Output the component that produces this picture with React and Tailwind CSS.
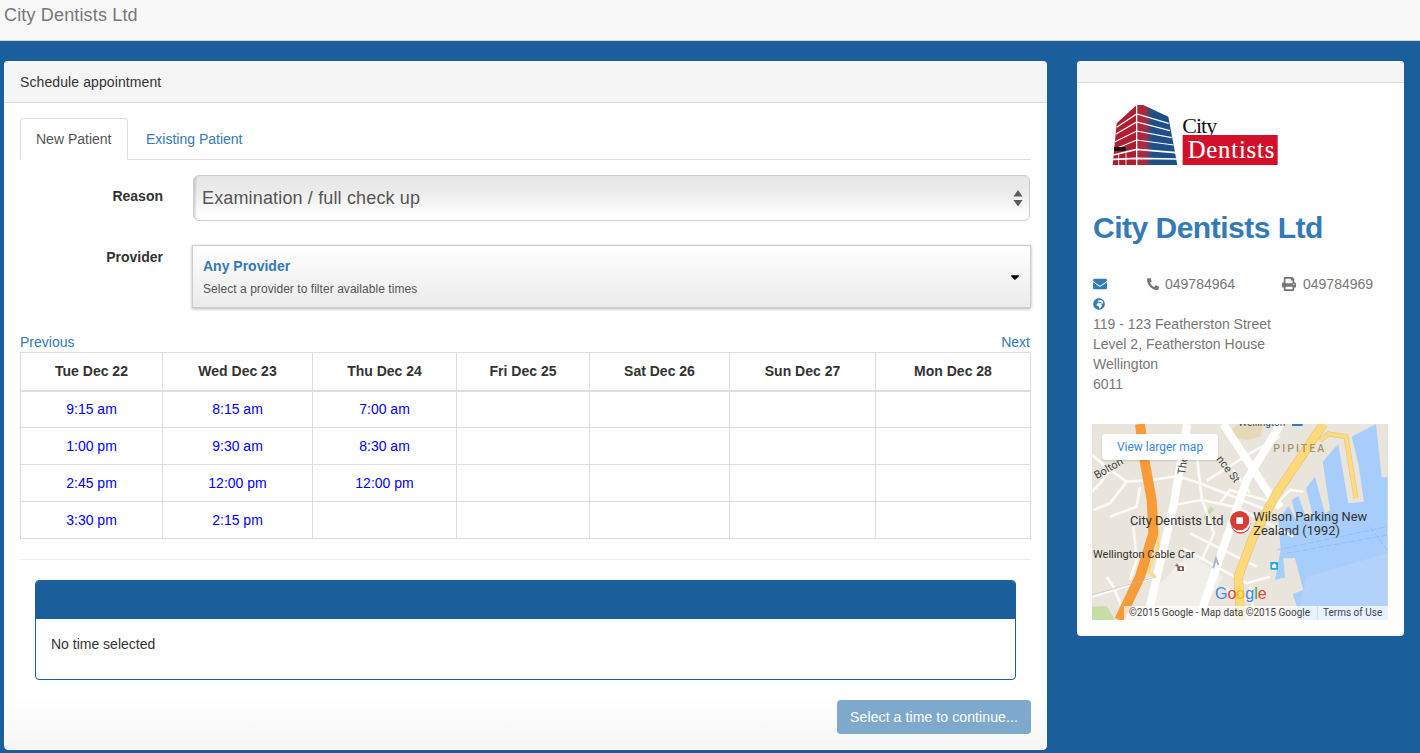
import React from "react";
import { FaEnvelope, FaPhone, FaPrint, FaGlobeAfrica, FaCaretDown } from "react-icons/fa";

const cols = [
  ["Tue Dec 22", "w-[142px]", ["9:15 am", "1:00 pm", "2:45 pm", "3:30 pm"]],
  ["Wed Dec 23", "w-[150px]", ["8:15 am", "9:30 am", "12:00 pm", "2:15 pm"]],
  ["Thu Dec 24", "w-[144px]", ["7:00 am", "8:30 am", "12:00 pm", ""]],
  ["Fri Dec 25", "w-[133px]", ["", "", "", ""]],
  ["Sat Dec 26", "w-[140px]", ["", "", "", ""]],
  ["Sun Dec 27", "w-[146px]", ["", "", "", ""]],
  ["Mon Dec 28", "w-[155px]", ["", "", "", ""]],
];

function Logo() {
  const stripes = [
    "M80 112 L140 72 L236 100",
    "M77 133 L140 96 L240 122",
    "M75 155 L140 123 L245 143",
    "M73 178 L140 150 L251 165",
    "M70 195 L140 178 L257 188",
    "M69 208 L140 205 L260 207",
  ];
  return (
    <svg viewBox="0 0 630 270" className="block w-[210px] h-[90px] -ml-[3px]">
      <defs>
        <linearGradient id="bld" x1="0" x2="1" y1="0" y2="0">
          <stop offset="0" stopColor="#b8202f" />
          <stop offset="0.2" stopColor="#a82b45" />
          <stop offset="0.38" stopColor="#1f4f86" />
          <stop offset="1" stopColor="#1f4f86" />
        </linearGradient>
      </defs>
      <polygon points="140,45 80,100 68,225 140,225" fill="#ad1f30" />
      <polygon points="140,45 160,45 235,80 262,225 140,225" fill="url(#bld)" />
      {stripes.map((d, i) => (
        <path key={i} d={d} fill="none" stroke="#fff" strokeWidth={i > 3 ? 5 : 3.5} />
      ))}
      <path d="M140 45 V225" stroke="#fff" strokeWidth="4" />
      <path d="M86 190 V225 M108 190 V225" stroke="#fff" strokeWidth="2.5" />
      <rect x="72" y="171" width="35" height="12" fill="#111" />
      <text x="277" y="130" fontFamily="'Liberation Serif', serif" fontSize="66" fill="#111" letterSpacing="-3">City</text>
      <rect x="278" y="135" width="285" height="90" fill="#d3102a" />
      <text x="293" y="205" fontFamily="'Liberation Serif', serif" fontSize="74" fill="#fff" stroke="#fff" strokeWidth="0.4" letterSpacing="2.5">Dentists</text>
    </svg>
  );
}

function MapArt() {
  const minor = [
    "M6 105 L60 150 L30 190 L6 215",
    "M60 150 L110 185 L185 180 L262 168 L330 190 L530 270",
    "M10 270 L60 250 L110 185",
    "M60 290 L140 260 L150 200",
    "M320 100 L335 235 L372 340 L335 420",
    "M300 340 L500 440",
    "M250 255 L335 240 L440 262 L610 350",
    "M350 182 L480 100 L570 50",
    "M430 150 L480 220",
    "M385 255 L420 210 L560 250 L600 210 L640 215",
    "M130 320 L140 420 L120 480",
    "M280 385 L470 490 L540 470",
    "M6 530 L100 500 L200 470",
    "M50 470 L70 500 L95 560",
    "M400 500 L470 540",
    "M480 500 L490 570",
  ];
  const road = "Roboto, sans-serif";
  return (
    <svg viewBox="6 12 888 588" className="block w-[296px] h-[196px]">
      <rect x="6" y="12" width="888" height="588" fill="#e9e5dc" />
      <polygon points="892,172 875,172 858,12 785,50 805,130 822,245 775,250 745,72 698,125 720,270 705,282 675,170 648,205 668,285 650,298 625,228 605,240 622,305 595,258 565,300 572,390 555,480 585,472 580,415 615,415 640,510 608,522 635,600 892,600" fill="#a6cdfb" />
      <polygon points="620,600 650,470 892,400 892,600" fill="#b3d2fb" />
      <polygon points="422,30 445,12 520,12 512,48 472,60 440,56" fill="#e7d9b6" />
      <polygon points="340,292 362,258 372,268 345,302" fill="#c6dea6" />
      <polygon points="6,560 50,558 75,600 6,600" fill="#c6dea6" />
      <polygon points="200,500 300,400 400,470 320,600 180,600" fill="#f1efea" />
      {minor.map((d, i) => (
        <path key={i} d={d} fill="none" stroke="#fbfaf7" strokeWidth="8" />
      ))}
      <path d="M400 12 L540 225 L572 262" fill="none" stroke="#fff" strokeWidth="24" />
      <path d="M572 12 L470 180 L325 600" fill="none" stroke="#fff" strokeWidth="24" />
      <path d="M292 12 L250 260 L170 600" fill="none" stroke="#fff" strokeWidth="24" />
      <path d="M690 62 L715 42 L768 50 L798 235" fill="none" stroke="#e6c678" strokeWidth="15" />
      <path d="M690 62 L715 42 L768 50 L798 235" fill="none" stroke="#fddb85" strokeWidth="11" />
      <path d="M200 260 L205 380 L175 455 L195 470" fill="none" stroke="#fddb85" strokeWidth="9" />
      <path d="M700 12 L560 220 L490 350 L445 470 L452 600" fill="none" stroke="#e3c67a" strokeWidth="28" />
      <path d="M700 12 L560 220 L490 350 L445 470 L452 600" fill="none" stroke="#fdd97a" strokeWidth="24" />
      <path d="M150 12 L165 130 L185 240 L190 340 L150 470 L88 600" fill="none" stroke="#f99b39" strokeWidth="30" />
      <path d="M560 390 L892 320 M590 400 L892 345 M840 320 L892 390" fill="none" stroke="#8db8ef" strokeWidth="2" strokeDasharray="18 6" />
      <path d="M370 445 L378 415 L385 435" fill="none" stroke="#a8b7cf" strokeWidth="6" />
      <path d="M6 525 L200 470" stroke="#b8b6b0" strokeWidth="2" fill="none" />

      <text x="445" y="17" fontFamily={road} fontSize="30" fill="#1f4f7a">Wellington</text>
      <rect x="606" y="6" width="32" height="12" fill="#2b7bd0" />
      <text x="550" y="95" fontFamily={road} fontSize="32" fill="#a8946f" letterSpacing="6" fontWeight="500">PIPITEA</text>
      <text fontFamily={road} fontSize="33" fill="#444" transform="translate(20 178) rotate(-30)">Bolton</text>
      <text fontFamily={road} fontSize="33" fill="#444" transform="translate(285 165) rotate(-82)">The</text>
      <text fontFamily={road} fontSize="33" fill="#444" transform="translate(378 118) rotate(52)">nce St</text>
      <text x="120" y="315" fontFamily={road} fontSize="38.500" fill="#333">City Dentists Ltd</text>
      <text x="490" y="303" fontFamily={road} fontSize="38.500" fill="#333">Wilson Parking New</text>
      <text x="490" y="345" fontFamily={road} fontSize="38.500" fill="#333">Zealand (1992)</text>
      <text x="9" y="413" fontFamily={road} fontSize="33" fill="#333">Wellington Cable Car</text>

      <circle cx="452" cy="312" r="29" fill="#d13a35" />
      <circle cx="452" cy="308" r="29" fill="#fff" />
      <circle cx="449" cy="302" r="29" fill="#d73c37" />
      <rect x="439" y="292" width="20" height="20" fill="#fff" />

      <circle cx="272" cy="445" r="16" fill="#f5f3ee" />
      <rect x="262" y="439" width="20" height="14" rx="2" fill="#7a5a50" />
      <circle cx="273" cy="446" r="4" fill="#f5f3ee" />
      <path d="M256 436 H266 M261 431 V441" stroke="#7a5a50" strokeWidth="3" />

      <rect x="541" y="426" width="23" height="23" rx="2" fill="#1fa8e8" />
      <path d="M546 444 H559 V436 L552.500 430 L546 436 Z" fill="#fff" />

      <text x="375" y="538" fontFamily="'Liberation Sans', sans-serif" fontSize="48">
        <tspan fill="#4285f4">G</tspan><tspan fill="#ea4335">o</tspan><tspan fill="#fbbc05">o</tspan><tspan fill="#4285f4">g</tspan><tspan fill="#34a853">l</tspan><tspan fill="#ea4335">e</tspan>
      </text>

      <rect x="102" y="558" width="792" height="42" fill="#fff" fillOpacity="0.7" />
      <text x="117" y="587" fontFamily={road} fontSize="30" fill="#444">©2015 Google - Map data ©2015 Google</text>
      <rect x="681" y="558" width="2" height="42" fill="#c9d2dc" />
      <text x="699" y="587" fontFamily={road} fontSize="30" fill="#444">Terms of Use</text>
    </svg>
  );
}

export default function App() {
  return (
    <div className="h-[753px] overflow-hidden bg-[#1a5f9c] text-sm leading-5 text-[#333] font-['Liberation_Sans',Arial,sans-serif]">
      <nav className="h-[41px] bg-[#f8f8f8] border-b border-[#cfd3d6] pl-1 pt-[5px] text-lg leading-5 tracking-[0.16px] text-[#777]">
        City Dentists Ltd
      </nav>
      <main className="flex gap-[30px] pl-1 pt-5">
        <section className="w-[1043px] h-[689px] rounded border border-white bg-[linear-gradient(to_bottom,#ffffff_92%,#f6f6f6_100%)] flex flex-col">
          <div className="h-[42px] -mx-px -mt-px shrink-0 rounded-t bg-[#f5f5f5] border-b border-[#ddd] px-4 pt-[11px] tracking-[0.1px]">
            Schedule appointment
          </div>
          <div className="flex flex-col px-[15px] pt-[15px]">
            <div className="flex h-[42px] border-b border-[#ddd]">
              <div className="h-[42px] w-[108px] rounded-t border border-[#ddd] border-b-white bg-white text-[#555] px-[15px] pt-[10px] whitespace-nowrap">
                New Patient
              </div>
              <a className="ml-0.5 px-4 pt-[11px] text-[#337ab7] whitespace-nowrap">Existing Patient</a>
            </div>

            <div className="flex mt-[15px]">
              <label className="w-[143px] text-right font-bold pt-[11px]">Reason</label>
              <div className="ml-[30px] w-[837px] h-[46px] rounded-md border border-[#ccc] bg-[linear-gradient(to_bottom,#e6e6e6,#ebebeb_35%,#ffffff_90%)] shadow-[inset_3px_0_3px_-2px_rgba(0,0,0,0.2)] flex items-center justify-between pl-2 pr-1.5 text-lg tracking-[0.15px] text-[#555]">
                <span>Examination / full check up</span>
                <svg width="10" height="17" viewBox="0 0 10 17"><path d="M5 0 L9.500 6.500 H0.500 Z M0.500 10 H9.500 L5 16.500 Z" fill="#5c5c5c" /></svg>
              </div>
            </div>

            <div className="flex mt-6">
              <label className="w-[143px] text-right font-bold pt-[2px]">Provider</label>
              <div className="ml-[29px] w-[839px] h-[63px] border border-[#ccc] bg-[linear-gradient(to_bottom,#ffffff,#ebebeb)] shadow-[0_1px_3px_rgba(0,0,0,0.3)] flex items-center justify-between pl-[10px] pr-[9px]">
                <div className="pt-0.5">
                  <div className="font-bold text-[#337ab7] leading-5">Any Provider</div>
                  <div className="text-xs text-[#555] mt-[3px] leading-5 tracking-[0.05px]">Select a provider to filter available times</div>
                </div>
                <FaCaretDown className="text-black w-[12px] h-[14px] mt-px" />
              </div>
            </div>

            <div className="flex justify-between mt-6 text-[#337ab7]">
              <a>Previous</a>
              <a className="mr-px">Next</a>
            </div>

            <table className="table-fixed border-collapse w-[1010px] text-center">
              <thead>
                <tr>
                  {cols.map(([d, w]) => (
                    <th key={d} className={`${w} h-[38px] border border-b-2 border-[#ddd] font-bold`}>{d}</th>
                  ))}
                </tr>
              </thead>
              <tbody>
                {[0, 1, 2, 3].map((r) => (
                  <tr key={r}>
                    {cols.map(([d, , t]) => (
                      <td key={d} className="h-[37px] border border-[#ddd] text-[#0000ff]">{t[r]}</td>
                    ))}
                  </tr>
                ))}
              </tbody>
            </table>

            <hr className="mt-5 border-0 border-t border-[#eee]" />

            <div className="mt-5 mx-[15px] h-[100px] rounded border border-[#1a5f9c] overflow-hidden bg-white">
              <div className="h-[38px] bg-[#1a5f9c]" />
              <div className="px-[15px] pt-[15px]">No time selected</div>
            </div>

            <button className="self-end mt-5 h-[34px] w-[194px] rounded bg-[#7ea9cd] text-white text-sm tracking-[0.1px] whitespace-nowrap">
              Select a time to continue...
            </button>
          </div>
        </section>

        <aside className="w-[327px] h-[575px] rounded bg-white">
          <div className="h-[22px] rounded-t bg-[#f5f5f5] border-b border-[#ddd]" />
          <div className="pl-4 pr-4">
            <div className="pt-[7px] h-[97px]"><Logo /></div>
            <h2 className="mt-[31px] text-[30px] leading-[33px] font-bold text-[#337ab7] tracking-[-0.5px] whitespace-nowrap">City Dentists Ltd</h2>
            <div className="mt-[30px] text-[#777]">
              <div className="flex h-5 items-center">
                <div className="w-[54px]"><FaEnvelope className="text-[#337ab7] w-[14px] h-[14px]" /></div>
                <div className="w-[135px] flex items-center gap-[6px]"><FaPhone className="w-3 h-3 text-[#777] scale-x-[-1]" /><span>049784964</span></div>
                <div className="flex items-center gap-[7px]"><FaPrint className="w-[14px] h-[14px] text-[#777]" /><span>049784969</span></div>
              </div>
              <div className="h-5 flex items-center"><FaGlobeAfrica className="text-[#337ab7] w-3 h-3" /></div>
              <div>119 - 123 Featherston Street</div>
              <div>Level 2, Featherston House</div>
              <div>Wellington</div>
              <div>6011</div>
            </div>
            <div className="relative mt-[30px] -ml-px w-[296px] h-[196px]">
              <MapArt />
              <div className="absolute left-[10px] top-[10px] w-[116px] h-[26px] bg-white rounded-sm shadow-[0_1px_2px_rgba(0,0,0,0.15)] flex items-center justify-center text-xs text-[#3a84df] font-['Roboto',sans-serif]">
                View larger map
              </div>
            </div>
          </div>
        </aside>
      </main>
    </div>
  );
}
